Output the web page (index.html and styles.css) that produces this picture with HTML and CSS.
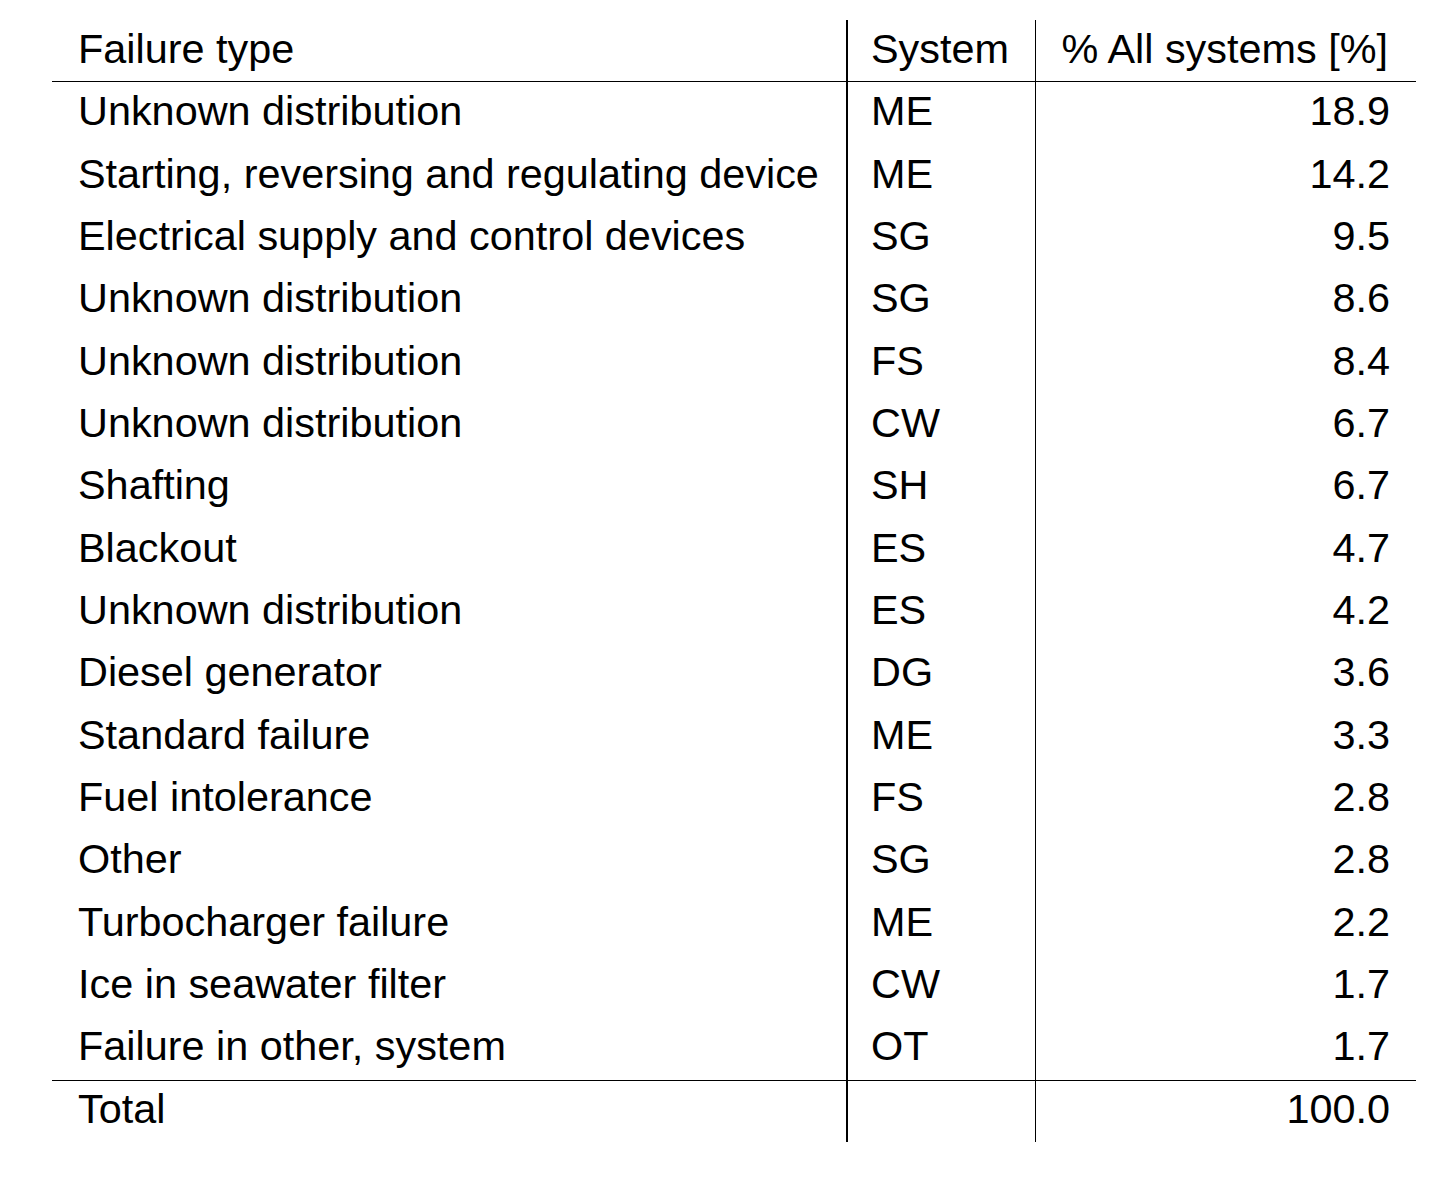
FILE: index.html
```html
<!DOCTYPE html>
<html>
<head>
<meta charset="utf-8">
<link rel="stylesheet" href="styles.css">
</head>
<body>
<table class="tbl">
  <colgroup>
    <col class="c1"><col class="c2"><col class="c3">
  </colgroup>
  <thead>
    <tr><th class="type">Failure type</th><th class="sys">System</th><th class="pct">% All systems [%]</th></tr>
  </thead>
  <tbody>
    <tr><td class="type">Unknown distribution</td><td class="sys">ME</td><td class="pct">18.9</td></tr>
    <tr><td class="type">Starting, reversing and regulating device</td><td class="sys">ME</td><td class="pct">14.2</td></tr>
    <tr><td class="type">Electrical supply and control devices</td><td class="sys">SG</td><td class="pct">9.5</td></tr>
    <tr><td class="type">Unknown distribution</td><td class="sys">SG</td><td class="pct">8.6</td></tr>
    <tr><td class="type">Unknown distribution</td><td class="sys">FS</td><td class="pct">8.4</td></tr>
    <tr><td class="type">Unknown distribution</td><td class="sys">CW</td><td class="pct">6.7</td></tr>
    <tr><td class="type">Shafting</td><td class="sys">SH</td><td class="pct">6.7</td></tr>
    <tr><td class="type">Blackout</td><td class="sys">ES</td><td class="pct">4.7</td></tr>
    <tr><td class="type">Unknown distribution</td><td class="sys">ES</td><td class="pct">4.2</td></tr>
    <tr><td class="type">Diesel generator</td><td class="sys">DG</td><td class="pct">3.6</td></tr>
    <tr><td class="type">Standard failure</td><td class="sys">ME</td><td class="pct">3.3</td></tr>
    <tr><td class="type">Fuel intolerance</td><td class="sys">FS</td><td class="pct">2.8</td></tr>
    <tr><td class="type">Other</td><td class="sys">SG</td><td class="pct">2.8</td></tr>
    <tr><td class="type">Turbocharger failure</td><td class="sys">ME</td><td class="pct">2.2</td></tr>
    <tr><td class="type">Ice in seawater filter</td><td class="sys">CW</td><td class="pct">1.7</td></tr>
    <tr><td class="type">Failure in other, system</td><td class="sys">OT</td><td class="pct">1.7</td></tr>
  </tbody>
  <tfoot>
    <tr><td class="type">Total</td><td class="sys"></td><td class="pct">100.0</td></tr>
  </tfoot>
</table>
</body>
</html>
```

FILE: styles.css
```css
html, body {
  margin: 0;
  padding: 0;
  background: #ffffff;
}

body {
  padding: 20px 0 0 52px;
  font-family: "Liberation Sans", Arial, sans-serif;
  color: #000000;
}

.tbl {
  border-collapse: separate;
  border-spacing: 0;
  table-layout: fixed;
  width: 1364px;
  font-size: 41.4px;
}

.c1 { width: 794px; }
.c2 { width: 189px; }
.c3 { width: 381px; }

.tbl th,
.tbl td {
  height: 62.33px;
  padding: 0 0 4px 0;
  box-sizing: border-box;
  font-weight: normal;
  vertical-align: middle;
  white-space: nowrap;
  line-height: 46px;
}

.tbl .type {
  padding-left: 26px;
  text-align: left;
}

.tbl .sys {
  padding-left: 23px;
  text-align: left;
  border-left: 2px solid #000;
}

.tbl .pct {
  padding-right: 26px;
  text-align: right;
  border-left: 1px solid #000;
}

.tbl thead th.pct {
  padding-right: 28px;
}

.tbl thead th {
  border-bottom: 1px solid #000;
}

.tbl tfoot td {
  border-top: 1px solid #000;
}
```
